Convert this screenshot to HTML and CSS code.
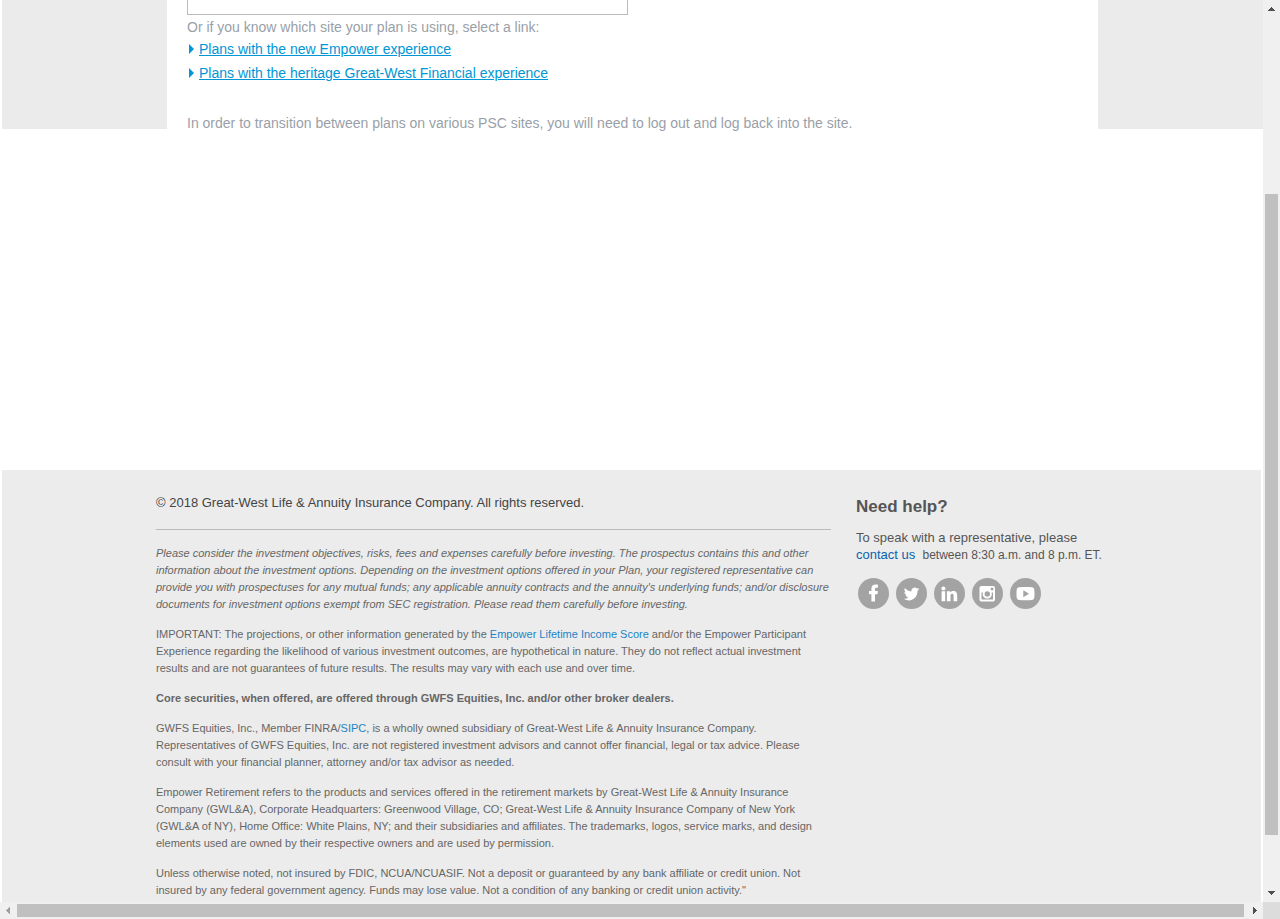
FILE: index.html
```html
<!DOCTYPE html>
<html lang="en">
<head>
<meta charset="utf-8">
<title>Plan selection</title>
<link rel="stylesheet" href="styles.css">
</head>
<body>
<div class="window">
  <div class="page">
    <main class="portal">
      <div class="side"></div>
      <div class="panel">
        <input class="search" type="text" aria-label="Plan search">
        <p class="hint">Or if you know which site your plan is using, select a link:</p>
        <ul class="links">
          <li><a href="#">Plans with the new Empower experience</a></li>
          <li><a href="#">Plans with the heritage Great-West Financial experience</a></li>
        </ul>
        <p class="note">In order to transition between plans on various PSC sites, you will need to log out and log back into the site.</p>
      </div>
      <div class="side"></div>
    </main>
    <footer class="footer">
      <div class="footer-inner">
        <div class="legal">
          <p class="copyright">© 2018 Great-West Life &amp; Annuity Insurance Company. All rights reserved.</p>
          <p><em>Please consider the investment objectives, risks, fees and expenses carefully before investing. The prospectus contains this and other information about the investment options. Depending on the investment options offered in your Plan, your registered representative can provide you with prospectuses for any mutual funds; any applicable annuity contracts and the annuity's underlying funds; and/or disclosure documents for investment options exempt from SEC registration. Please read them carefully before investing.</em></p>
          <p>IMPORTANT: The projections, or other information generated by the <a href="#">Empower Lifetime Income Score</a> and/or the Empower Participant Experience regarding the likelihood of various investment outcomes, are hypothetical in nature. They do not reflect actual investment results and are not guarantees of future results. The results may vary with each use and over time.</p>
          <p><strong>Core securities, when offered, are offered through GWFS Equities, Inc. and/or other broker dealers.</strong></p>
          <p>GWFS Equities, Inc., Member FINRA/<a href="#">SIPC</a>, is a wholly owned subsidiary of Great-West Life &amp; Annuity Insurance Company. Representatives of GWFS Equities, Inc. are not registered investment advisors and cannot offer financial, legal or tax advice. Please consult with your financial planner, attorney and/or tax advisor as needed.</p>
          <p>Empower Retirement refers to the products and services offered in the retirement markets by Great-West Life &amp; Annuity Insurance Company (GWL&amp;A), Corporate Headquarters: Greenwood Village, CO; Great-West Life &amp; Annuity Insurance Company of New York (GWL&amp;A of NY), Home Office: White Plains, NY; and their subsidiaries and affiliates. The trademarks, logos, service marks, and design elements used are owned by their respective owners and are used by permission.</p>
          <p>Unless otherwise noted, not insured by FDIC, NCUA/NCUASIF. Not a deposit or guaranteed by any bank affiliate or credit union. Not insured by any federal government agency. Funds may lose value. Not a condition of any banking or credit union activity."</p>
        </div>
        <aside class="help">
          <h2>Need help?</h2>
          <p>To speak with a representative, please<br><a href="#">contact us</a>&nbsp; <span class="hours">between 8:30 a.m. and 8 p.m. ET.</span></p>
          <nav class="social">
            <a href="#" aria-label="Facebook"><svg viewBox="0 0 31 31"><path d="M13.400 23.500V16.200H11V13h2.400v-2.200c0-2.700 1.600-4.200 4.200-4.200 1.100 0 2.300.1 2.300.1v3h-1.500c-1 0-1.400.6-1.400 1.400V13h2.900l-.4 3.200H17v7.300z"/></svg></a>
            <a href="#" aria-label="Twitter"><svg viewBox="0 0 31 31"><path d="M23.300 11c-.6.300-1.200.4-1.800.5.700-.4 1.100-1 1.400-1.700-.6.400-1.300.6-2 .8a3.200 3.200 0 0 0-5.500 2.900c-2.600-.1-5-1.400-6.500-3.400-.9 1.500-.4 3.300 1 4.300-.5 0-1-.2-1.500-.4 0 1.600 1.100 2.900 2.600 3.200-.5.100-1 .1-1.500.1.400 1.200 1.600 2.200 3 2.200-1.400 1.100-3 1.500-4.700 1.300 6.800 4.300 14-.7 13.700-8 .7-.5 1.300-1.100 1.800-1.800z"/></svg></a>
            <a href="#" aria-label="LinkedIn"><svg viewBox="0 0 31 31"><circle cx="9.400" cy="10.400" r="2"/><path d="M7.600 13.200h3.600V23.200H7.600zM12.900 13.200h3.400v1.300c.5-.9 1.500-1.600 3-1.600 3.200 0 3.900 2.100 3.900 4.700v5.600h-3.600v-5.100c0-1.100 0-2.300-1.400-2.300s-1.700 1.100-1.700 2.300v5.100h-3.600z"/></svg></a>
            <a href="#" aria-label="Instagram"><svg viewBox="0 0 31 31"><path fill-rule="evenodd" d="M9.500 8h11.500a2 2 0 0 1 2 2v11.500a2 2 0 0 1-2 2H9.500a2 2 0 0 1-2-2V10a2 2 0 0 1 2-2zM18.800 9.800V12.300H21.300V9.800zM9.500 14.500v6.900h11.500v-6.900h-1.400a4.600 4.600 0 1 1-8.700 0zM15.300 13.200a2.700 2.700 0 1 0 0 5.400 2.700 2.700 0 0 0 0-5.400z"/></svg></a>
            <a href="#" aria-label="YouTube"><svg viewBox="0 0 31 31"><path fill-rule="evenodd" d="M9.200 9.300c4.200-.4 8.400-.4 12.600 0 1.500.1 2.300.9 2.500 2.400.3 2.600.3 5.200 0 7.800-.2 1.500-1 2.300-2.500 2.500-4.200.3-8.400.3-12.600 0-1.500-.2-2.300-1-2.500-2.500-.3-2.600-.3-5.200 0-7.800.2-1.500 1-2.300 2.500-2.400zM13.300 12.200v7l5.700-3.500z"/></svg></a>
          </nav>
        </aside>
      </div>
    </footer>
  </div>
  <div class="bar bar-v">
    <svg class="arrow" viewBox="0 0 17 17" shape-rendering="crispEdges"><path d="M8 7h1v1h1v1h1v1h1v1H5v-1h1V9h1V8h1z"/></svg>
    <div class="track"><div class="thumb"></div></div>
    <svg class="arrow" viewBox="0 0 17 17" shape-rendering="crispEdges"><path d="M5 6h7v1h-1v1h-1v1H9v1H8V9H7V8H6V7H5z"/></svg>
  </div>
  <div class="bar bar-h">
    <svg class="arrow dim" viewBox="0 0 17 17" shape-rendering="crispEdges"><path d="M10 5v7H9v-1H8v-1H7V9H6V8h1V7h1V6h1V5z"/></svg>
    <div class="track"><div class="thumb"></div></div>
    <svg class="arrow" viewBox="0 0 17 17" shape-rendering="crispEdges"><path d="M7 5h1v1h1v1h1v1h1v1h-1v1H9v1H8v1H7z"/></svg>
  </div>
  <div class="corner"></div>
</div>
</body>
</html>
```
FILE: styles.css
```css
* {
  box-sizing: border-box;
}

body {
  margin: 0;
  background: #fff;
  font-family: "Liberation Sans", Arial, sans-serif;
}

p, h2, ul {
  margin: 0;
  padding: 0;
}

/* Window frame: page area, two scroll bars and their corner */
.window {
  display: grid;
  grid-template-columns: minmax(0, 1fr) 17px;
  grid-template-rows: minmax(0, 1fr) 17px;
  height: 100vh;
  overflow: hidden;
}

.page {
  padding-left: 2px;
  overflow: hidden;
}

/* Plan selection */
.portal {
  display: grid;
  grid-template-columns: 1fr 931px 1fr;
  align-items: start;
  padding-bottom: 335px;
}

.side {
  height: 129px;
  background: #ebebeb;
}

.panel {
  padding: 0 20px;
  color: #999fa8;
  font-size: 14px;
  line-height: 24px;
}

.search {
  display: block;
  width: 441px;
  height: 15px;
  border: 1px solid #bbb;
  border-top: 0;
  background: #fff;
}

.hint {
  padding-top: 2px;
  line-height: 20px;
}

.links {
  list-style: none;
  margin-bottom: 26px;
}

.links li {
  display: flex;
  align-items: center;
  gap: 5px;
  padding-left: 2px;
  height: 24px;
}

.links li::before {
  content: "";
  border: 5px solid transparent;
  border-left-color: #0096d6;
  border-right: 0;
}

.links a {
  color: #0096d6;
}

/* Footer */
.footer {
  margin-right: 2px;
  padding: 24px 0;
  background: #ececec;
}

.footer-inner {
  display: flex;
  gap: 25px;
  width: 951px;
  margin: 0 auto;
}

.footer a {
  color: #2384c6;
  text-decoration: none;
}

.legal {
  width: 675px;
  color: #666;
  font-size: 11px;
  line-height: 17px;
}

.legal p {
  margin-bottom: 13px;
}

.legal .copyright {
  margin-bottom: 15px;
  padding-bottom: 18px;
  border-bottom: 1px solid #bbb;
  color: #444;
  font-size: 13px;
}

.help {
  flex: 1;
  color: #555;
  font-size: 13px;
  line-height: 17px;
}

.help h2 {
  margin-bottom: 9px;
  font-size: 17px;
  line-height: 26px;
}

.help p a {
  color: #0a62ae;
}

.hours {
  font-size: 12px;
}

.social {
  display: flex;
  gap: 7px;
  padding: 14px 2px 0;
}

.social a {
  width: 31px;
  height: 31px;
  border-radius: 50%;
  background: #a3a3a3;
}

.social svg {
  display: block;
  fill: #fff;
}

/* Scroll bars */
.bar {
  display: flex;
  background: #f0f0f0;
}

.bar-v {
  flex-direction: column;
}

.arrow {
  flex: none;
  width: 17px;
  height: 17px;
  fill: #505050;
}

.dim {
  fill: #a0a0a0;
}

.track {
  display: flex;
  flex: 1;
}

.thumb {
  background: #c0c0c0;
}

.bar-v .track {
  flex-direction: column;
  padding: 177px 2px 50px;
}

.bar-h .track {
  padding: 2px 2px 2px 0;
}

.bar .thumb {
  flex: 1;
}

.corner {
  background: #dcdcdc;
}
```
